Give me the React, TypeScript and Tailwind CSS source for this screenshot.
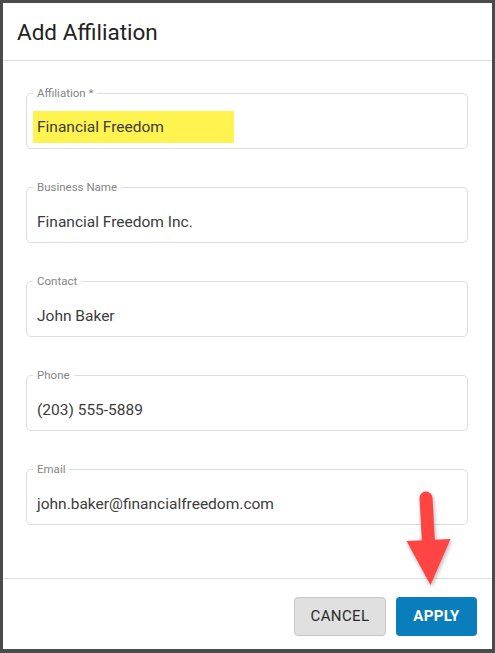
import type { ReactNode } from 'react';

const fields = [
  { label: 'Affiliation *', value: 'Financial Freedom', highlight: true },
  { label: 'Business Name', value: 'Financial Freedom Inc.' },
  { label: 'Contact', value: 'John Baker' },
  { label: 'Phone', value: '(203) 555-5889' },
  { label: 'Email', value: 'john.baker@financialfreedom.com' },
];

function Field({ label, children }: { label: string; children: ReactNode }) {
  return (
    <fieldset className="h-[64px] border border-[#dcdcdc] rounded-[5px] pl-[10px] pr-[10px] pt-[2px] m-0 min-w-0">
      <legend className="px-[4px] ml-[-4px] text-[11.5px] leading-[16px] text-[#858585]">{label}</legend>
      {children}
    </fieldset>
  );
}

function DownArrow() {
  return (
    <svg
      className="absolute left-[400px] top-[485px] drop-shadow-[1px_2px_2px_rgba(0,0,0,0.3)]"
      width="60"
      height="110"
      viewBox="0 0 60 110"
    >
      <line x1="26" y1="13" x2="28.5" y2="58" stroke="#ff4444" strokeWidth="13" strokeLinecap="round" />
      <polygon points="6.5,56 50.5,54 30.5,100" fill="#ff4444" />
    </svg>
  );
}

export default function App() {
  return (
    <div className="relative w-[495px] h-[653px] bg-[#4b4b4b] pt-[3px] pl-[3px] pr-[3px] pb-[4px] font-['Roboto',sans-serif]">
      <div className="flex flex-col h-full bg-white">
        <div className="h-[58px] flex items-center pl-[14px] border-b border-[#e0e0e0] shrink-0">
          <h2 className="text-[22.5px] text-[#222] leading-none mt-[1px]">Add Affiliation</h2>
        </div>
        <div className="flex-1 flex flex-col gap-[30px] pt-[24px] pl-[23px] pr-[24px]">
          {fields.map((f) =>
            f.highlight ? (
              <Field key={f.label} label={f.label}>
                <div className="ml-[-4px] mt-[8px] w-[201px] h-[32px] flex items-center pl-[4px] bg-[#fff350] text-[15.5px] text-[#3c3c3c] leading-[24px]">
                  {f.value}
                </div>
              </Field>
            ) : (
              <Field key={f.label} label={f.label}>
                <div className="pt-[13px] text-[15.5px] text-[#3c3c3c] leading-[24px]">{f.value}</div>
              </Field>
            )
          )}
        </div>
        <div className="h-[71px] shrink-0 border-t border-[#e0e0e0] flex items-center justify-end gap-[10px] pr-[15px] pt-[4px]">
          <button className="h-[39px] w-[92px] rounded-[4px] bg-[#e0e0e0] border border-[#c6c6c6] text-[15px] font-normal tracking-[0.4px] text-[#2a2a2a]">
            CANCEL
          </button>
          <button className="h-[39px] w-[81px] rounded-[4px] bg-[#0a7ebd] text-[15px] font-bold tracking-[0.3px] text-white">
            APPLY
          </button>
        </div>
      </div>
      <DownArrow />
    </div>
  );
}
